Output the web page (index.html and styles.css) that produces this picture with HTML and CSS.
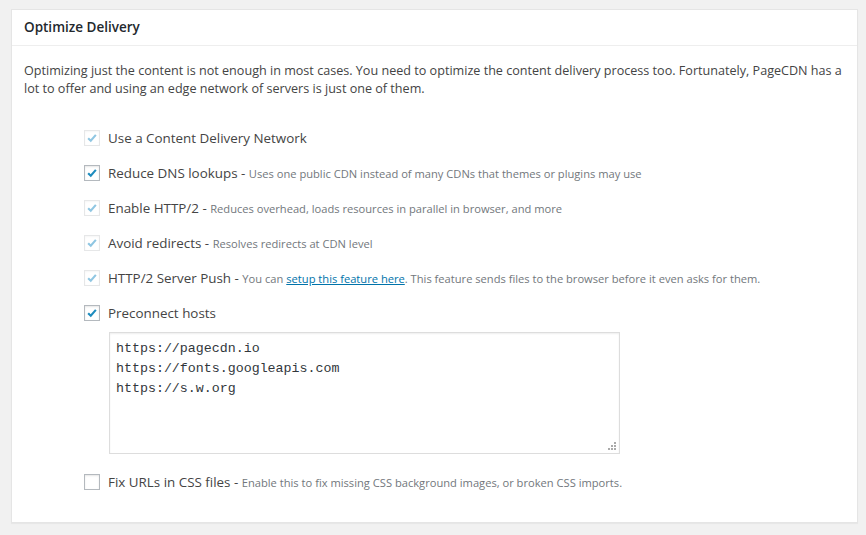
FILE: index.html
```html
<!DOCTYPE html>
<html>
<head>
<meta charset="utf-8">
<link rel="stylesheet" href="styles.css">
</head>
<body>
<div class="card">
  <div class="card-head">Optimize Delivery</div>
  <div class="card-body">
    <p class="intro">Optimizing just the content is not enough in most cases. You need to optimize the content delivery process too. Fortunately, PageCDN has a lot to offer and using an edge network of servers is just one of them.</p>
    <div class="options">
      <div class="row">
        <span class="cb checked disabled"><svg viewBox="0 0 16 16"><path d="M3.6 8.2 L6.6 11.2 L12.4 4.4"/></svg></span>
        <span class="label">Use a Content Delivery Network</span>
      </div>
      <div class="row">
        <span class="cb checked"><svg viewBox="0 0 16 16"><path d="M3.6 8.2 L6.6 11.2 L12.4 4.4"/></svg></span>
        <span class="label">Reduce DNS lookups - <span class="desc">Uses one public CDN instead of many CDNs that themes or plugins may use</span></span>
      </div>
      <div class="row">
        <span class="cb checked disabled"><svg viewBox="0 0 16 16"><path d="M3.6 8.2 L6.6 11.2 L12.4 4.4"/></svg></span>
        <span class="label">Enable HTTP/2 - <span class="desc">Reduces overhead, loads resources in parallel in browser, and more</span></span>
      </div>
      <div class="row">
        <span class="cb checked disabled"><svg viewBox="0 0 16 16"><path d="M3.6 8.2 L6.6 11.2 L12.4 4.4"/></svg></span>
        <span class="label">Avoid redirects - <span class="desc">Resolves redirects at CDN level</span></span>
      </div>
      <div class="row">
        <span class="cb checked disabled"><svg viewBox="0 0 16 16"><path d="M3.6 8.2 L6.6 11.2 L12.4 4.4"/></svg></span>
        <span class="label">HTTP/2 Server Push - <span class="desc">You can <a href="#">setup this feature here</a>. This feature sends files to the browser before it even asks for them.</span></span>
      </div>
      <div class="row">
        <span class="cb checked"><svg viewBox="0 0 16 16"><path d="M3.6 8.2 L6.6 11.2 L12.4 4.4"/></svg></span>
        <span class="label">Preconnect hosts</span>
      </div>
      <div class="textarea">https://pagecdn.io
https://fonts.googleapis.com
https://s.w.org<span class="grip"></span></div>
      <div class="row last">
        <span class="cb"></span>
        <span class="label">Fix URLs in CSS files - <span class="desc">Enable this to fix missing CSS background images, or broken CSS imports.</span></span>
      </div>
    </div>
  </div>
</div>
</body>
</html>
```
FILE: styles.css
```css
html, body {
  margin: 0;
  padding: 0;
  background: #f1f1f1;
}
body {
  padding: 9px 8px 12px 11px;
  font-family: "Open Sans", "Noto Sans", sans-serif;
  color: #444;
}
.card {
  background: #fff;
  border: 1px solid #e5e5e5;
  box-shadow: 0 1px 1px rgba(0,0,0,.04);
}
.card-head {
  height: 35px;
  line-height: 35px;
  padding: 0 12px;
  font-size: 13.5px;
  font-weight: 600;
  color: #23282d;
  border-bottom: 1px solid #eee;
}
.card-body {
  padding: 0 12px 23px;
}
.intro {
  margin: 16px 0 0;
  font-size: 12.6px;
  line-height: 18px;
  color: #444;
}
.options {
  margin-top: 22px;
  padding-left: 60px;
}
.row {
  display: flex;
  align-items: center;
  height: 35px;
  gap: 8px;
}
.row.last {
  margin-top: 10px;
}
.cb {
  flex: none;
  width: 14px;
  height: 14px;
  border: 1px solid #b4b9be;
  background: #fff;
  box-shadow: inset 0 1px 2px rgba(0,0,0,.1);
  display: flex;
  align-items: center;
  justify-content: center;
}
.cb svg {
  width: 16px;
  height: 16px;
  fill: none;
  stroke: #1e8cbe;
  stroke-width: 2.4;
}
.cb.disabled {
  border-color: #e6e7e8;
  box-shadow: inset 0 1px 2px rgba(0,0,0,.04);
}
.cb.disabled svg {
  stroke: #8fc6e2;
}
.label {
  font-size: 13.4px;
  color: #444;
  white-space: nowrap;
}
.desc {
  font-size: 11.15px;
  color: #72777c;
}
.desc a {
  color: #0073aa;
  text-decoration: underline;
}
.textarea {
  position: relative;
  margin: 2px 0 0 25px;
  width: 497px;
  height: 106px;
  padding: 6px 6px 8px 6px;
  border: 1px solid #ddd;
  box-shadow: inset 0 1px 2px rgba(0,0,0,.07);
  font-family: "Liberation Mono", "DejaVu Sans Mono", monospace;
  font-size: 13.3px;
  line-height: 20px;
  color: #32373c;
  white-space: pre;
}
.grip {
  position: absolute;
  right: 3px;
  bottom: 3px;
  width: 8px;
  height: 8px;
  background:
    linear-gradient(#aaa, #aaa) 6px 0 / 2px 2px no-repeat,
    linear-gradient(#aaa, #aaa) 3px 3px / 2px 2px no-repeat,
    linear-gradient(#aaa, #aaa) 6px 3px / 2px 2px no-repeat,
    linear-gradient(#aaa, #aaa) 0 6px / 2px 2px no-repeat,
    linear-gradient(#aaa, #aaa) 3px 6px / 2px 2px no-repeat,
    linear-gradient(#aaa, #aaa) 6px 6px / 2px 2px no-repeat;
}
```
